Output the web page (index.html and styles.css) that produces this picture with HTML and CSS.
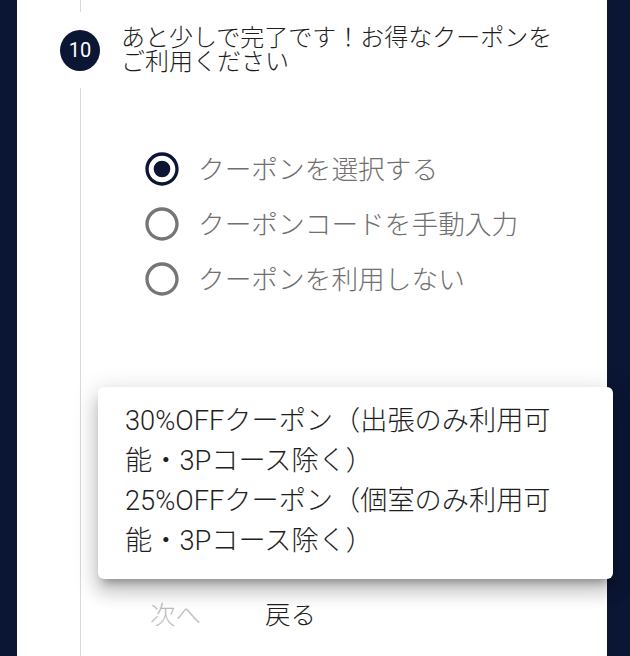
FILE: index.html
```html
<!DOCTYPE html>
<html lang="ja">
<head>
  <meta charset="UTF-8" />
  <meta name="viewport" content="width=device-width, initial-scale=1.0"/>
  <title>クーポン</title>
  <link rel="stylesheet" href="styles.css">
</head>
<body>
  <div class="panel">
    <div class="connector"></div>

    <div class="step-head">
      <div class="step-icon">10</div>
      <div class="step-title">あと少しで完了です！お得なクーポンを<br>ご利用ください</div>
    </div>

    <div class="step-content">
      <div class="radio-group">
        <label class="radio-row">
          <svg class="radio checked" viewBox="0 0 24 24">
            <path d="M12 2C6.48 2 2 6.48 2 12s4.48 10 10 10 10-4.48 10-10S17.52 2 12 2zm0 18c-4.42 0-8-3.58-8-8s3.580-8 8-8 8 3.58 8 8-3.58 8-8 8z"/>
            <circle cx="12" cy="12" r="5"/>
          </svg>
          <span>クーポンを選択する</span>
        </label>
        <label class="radio-row">
          <svg class="radio" viewBox="0 0 24 24">
            <path d="M12 2C6.48 2 2 6.48 2 12s4.48 10 10 10 10-4.48 10-10S17.52 2 12 2zm0 18c-4.42 0-8-3.58-8-8s3.58-8 8-8 8 3.58 8 8-3.58 8-8 8z"/>
          </svg>
          <span>クーポンコードを手動入力</span>
        </label>
        <label class="radio-row">
          <svg class="radio" viewBox="0 0 24 24">
            <path d="M12 2C6.48 2 2 6.48 2 12s4.48 10 10 10 10-4.48 10-10S17.52 2 12 2zm0 18c-4.42 0-8-3.58-8-8s3.58-8 8-8 8 3.58 8 8-3.58 8-8 8z"/>
          </svg>
          <span>クーポンを利用しない</span>
        </label>
      </div>

      <div class="actions">
        <button class="btn" disabled>次へ</button>
        <button class="btn">戻る</button>
      </div>
    </div>
  </div>

  <ul class="menu">
    <li class="menu-item">30%OFFクーポン（出張のみ利用可能・3Pコース除く）</li>
    <li class="menu-item">25%OFFクーポン（個室のみ利用可能・3Pコース除く）</li>
  </ul>
</body>
</html>
```

FILE: styles.css
```css
* { margin: 0; padding: 0; box-sizing: border-box; }
html, body { height: 100%; overflow: hidden; }
body {
  position: relative;
  background: #0b1634;
  font-family: Roboto, "Noto Sans CJK JP", sans-serif;
  font-weight: 300;
  color: #212121;
}

.panel {
  width: 590px; height: 656px;
  margin-left: 17px;
  background: #fff;
}

.connector { height: 12px; margin-left: 63px; border-left: 1px solid #d9d9d9; }

.step-head {
  display: flex; align-items: center;
  margin: 14px 0 14px 43px;
}
.step-icon {
  width: 40px; height: 41px; border-radius: 50%;
  background: #0b1634; color: #fff;
  font-size: 20px; font-weight: 400;
  display: flex; align-items: center; justify-content: center;
  flex-shrink: 0;
}
.step-title {
  margin-left: 21px;
  font-size: 24px; line-height: 24px;
  color: #1e1e1e;
}

.step-content {
  margin-left: 63px;
  border-left: 1px solid #d9d9d9;
  height: 570px;
  padding: 53px 0 0 61px;
}

.radio-row {
  display: flex; align-items: center;
  height: 55px;
  font-size: 26.7px; color: #707070;
}
.radio-row span { margin-top: -3px; }
.radio { width: 40px; height: 40px; fill: #757575; margin-right: 16px; flex-shrink: 0; }
.radio.checked { fill: #0b1634; }

.actions { display: flex; gap: 8px; margin: 285px 0 0 -20px; }
.btn {
  min-width: 107px; height: 43px;
  padding: 0 13px;
  border: none; background: none;
  font-family: inherit; font-weight: 300; font-size: 25.5px; color: #1e1e1e;
}
.btn:disabled { color: #bdbdbd; }

.menu {
  position: absolute; left: 98px; top: 387px;
  width: 515px;
  padding: 14px 40px 18px 27px;
  list-style: none;
  background: #fff;
  border-radius: 6px;
  box-shadow: 0 8px 9px -5px rgba(0,0,0,0.3),
              0 13px 17px 2px rgba(0,0,0,0.14),
              0 5px 23px 4px rgba(0,0,0,0.12);
}
.menu-item { font-size: 27.2px; line-height: 40px; color: #1e1e1e; }
```
